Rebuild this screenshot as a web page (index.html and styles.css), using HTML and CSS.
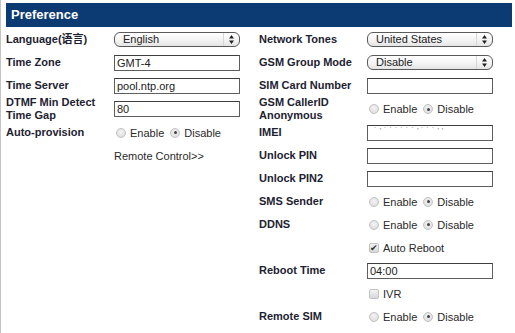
FILE: index.html
```html
<!DOCTYPE html>
<html>
<head>
<meta charset="utf-8">
<link rel="stylesheet" href="styles.css">
</head>
<body>
<div class="wrap">
  <div class="header">Preference</div>
  <div class="cols">
    <div class="col col-left">
      <div class="row"><div class="label">Language(语言)</div><div class="field"><div class="select"><span class="sel-text">English</span><span class="sel-arrow"><svg width="5" height="9" viewBox="0 0 5 9"><path d="M2.5 0 L5 3.5 L0 3.5 Z M0 5.5 L5 5.5 L2.5 9 Z" fill="#222"/></svg></span></div></div></div>
      <div class="row"><div class="label">Time Zone</div><div class="field"><div class="input">GMT-4</div></div></div>
      <div class="row"><div class="label">Time Server</div><div class="field"><div class="input">pool.ntp.org</div></div></div>
      <div class="row tall"><div class="label two">DTMF Min Detect<br>Time Gap</div><div class="field"><div class="input">80</div></div></div>
      <div class="row"><div class="label">Auto-provision</div><div class="field radios"><span class="radio"></span><span class="rl">Enable</span><span class="radio on"></span><span class="rl">Disable</span></div></div>
      <div class="row"><div class="label"></div><div class="field link">Remote Control&gt;&gt;</div></div>
    </div>
    <div class="col col-right">
      <div class="row"><div class="label">Network Tones</div><div class="field"><div class="select"><span class="sel-text">United States</span><span class="sel-arrow"><svg width="5" height="9" viewBox="0 0 5 9"><path d="M2.5 0 L5 3.5 L0 3.5 Z M0 5.5 L5 5.5 L2.5 9 Z" fill="#222"/></svg></span></div></div></div>
      <div class="row"><div class="label">GSM Group Mode</div><div class="field"><div class="select"><span class="sel-text">Disable</span><span class="sel-arrow"><svg width="5" height="9" viewBox="0 0 5 9"><path d="M2.5 0 L5 3.5 L0 3.5 Z M0 5.5 L5 5.5 L2.5 9 Z" fill="#222"/></svg></span></div></div></div>
      <div class="row"><div class="label">SIM Card Number</div><div class="field"><div class="input"></div></div></div>
      <div class="row tall"><div class="label two">GSM CallerID<br>Anonymous</div><div class="field radios"><span class="radio"></span><span class="rl">Enable</span><span class="radio on"></span><span class="rl">Disable</span></div></div>
      <div class="row"><div class="label">IMEI</div><div class="field"><div class="input blur">&#729; &#8217; &#729; &#729; &#729; &#729; &#729; &#729; &#8217; &#729; &#729; &#729; &#8217; &#8217;</div></div></div>
      <div class="row"><div class="label">Unlock PIN</div><div class="field"><div class="input"></div></div></div>
      <div class="row"><div class="label">Unlock PIN2</div><div class="field"><div class="input"></div></div></div>
      <div class="row"><div class="label">SMS Sender</div><div class="field radios"><span class="radio"></span><span class="rl">Enable</span><span class="radio on"></span><span class="rl">Disable</span></div></div>
      <div class="row"><div class="label">DDNS</div><div class="field radios"><span class="radio"></span><span class="rl">Enable</span><span class="radio on"></span><span class="rl">Disable</span></div></div>
      <div class="row"><div class="label"></div><div class="field radios"><span class="check on">&#10004;</span><span class="rl">Auto Reboot</span></div></div>
      <div class="row"><div class="label">Reboot Time</div><div class="field"><div class="input">04:00</div></div></div>
      <div class="row"><div class="label"></div><div class="field radios"><span class="check"></span><span class="rl">IVR</span></div></div>
      <div class="row"><div class="label">Remote SIM</div><div class="field radios"><span class="radio"></span><span class="rl">Enable</span><span class="radio on"></span><span class="rl">Disable</span></div></div>
    </div>
  </div>
</div>
</body>
</html>
```

FILE: styles.css
```css
html, body {
  margin: 0;
  padding: 0;
  background: #ffffff;
}
body {
  font-family: "Liberation Sans", Arial, "Noto Sans CJK SC", sans-serif;
  color: #1d2230;
  width: 515px;
  height: 333px;
  overflow: hidden;
}
.wrap {
  border-left: 1px solid #c4c4c4;
  padding: 3px 3px 0 5px;
  height: 330px;
}
.header {
  height: 24px;
  background: #0c3a73;
  color: #ffffff;
  font-weight: bold;
  font-size: 13px;
  line-height: 24px;
  padding-left: 5px;
}
.cols {
  display: flex;
  padding-top: 1px;
}
.col-left {
  width: 253px;
}
.col-right {
  width: 250px;
}
.row {
  display: flex;
  align-items: center;
  height: 23px;
}
.row.tall {
  height: 24px;
}
.label {
  width: 108px;
  flex: none;
  font-weight: bold;
  font-size: 11px;
  line-height: 13px;
}
.field {
  width: 126px;
  flex: none;
  font-size: 11px;
  color: #222;
}
.input {
  box-sizing: border-box;
  height: 16px;
  width: 126px;
  border: 1px solid #5e5e5e;
  border-top-color: #3e3e3e;
  background: #fff;
  padding-left: 2px;
  line-height: 14px;
  font-size: 11px;
  color: #222;
  white-space: nowrap;
  overflow: hidden;
}
.input.blur {
  color: #9a9a9a;
  font-size: 9px;
  line-height: 10px;
  padding-left: 6px;
}
.select {
  box-sizing: border-box;
  height: 15px;
  width: 126px;
  border: 1px solid #5a5a5a;
  border-radius: 6px;
  background: linear-gradient(#ffffff, #f2f2f2 60%, #e4e4e4);
  display: flex;
  align-items: center;
  overflow: hidden;
}
.sel-text {
  flex: 1;
  padding-left: 8px;
  font-size: 11px;
  line-height: 13px;
  color: #222;
}
.sel-arrow {
  width: 15px;
  height: 13px;
  border-left: 1px solid #d6d6d6;
  display: flex;
  align-items: center;
  justify-content: center;
}
.sel-arrow svg {
  display: block;
}
.radios {
  display: flex;
  align-items: center;
  padding-left: 2px;
}
.radio {
  box-sizing: border-box;
  width: 10px;
  height: 10px;
  border-radius: 50%;
  border: 1px solid #c2c2c2;
  background: radial-gradient(circle at 50% 40%, #f4f4f4, #d8d8d8);
  margin-right: 4px;
  position: relative;
  flex: none;
}
.radio.on::after {
  content: "";
  position: absolute;
  left: 2.5px;
  top: 2.5px;
  width: 3px;
  height: 3px;
  border-radius: 50%;
  background: #444;
}
.rl {
  font-size: 11px;
  color: #2a2a2a;
  margin-right: 6px;
}
.check {
  box-sizing: border-box;
  width: 10px;
  height: 10px;
  border: 1px solid #c2c2c2;
  border-radius: 2px;
  background: linear-gradient(#f4f4f4, #d8d8d8);
  margin-right: 4px;
  font-size: 9px;
  line-height: 8px;
  color: #333;
  text-align: center;
  flex: none;
}
.link {
  font-size: 11px;
  color: #2a2a2a;
}
```
